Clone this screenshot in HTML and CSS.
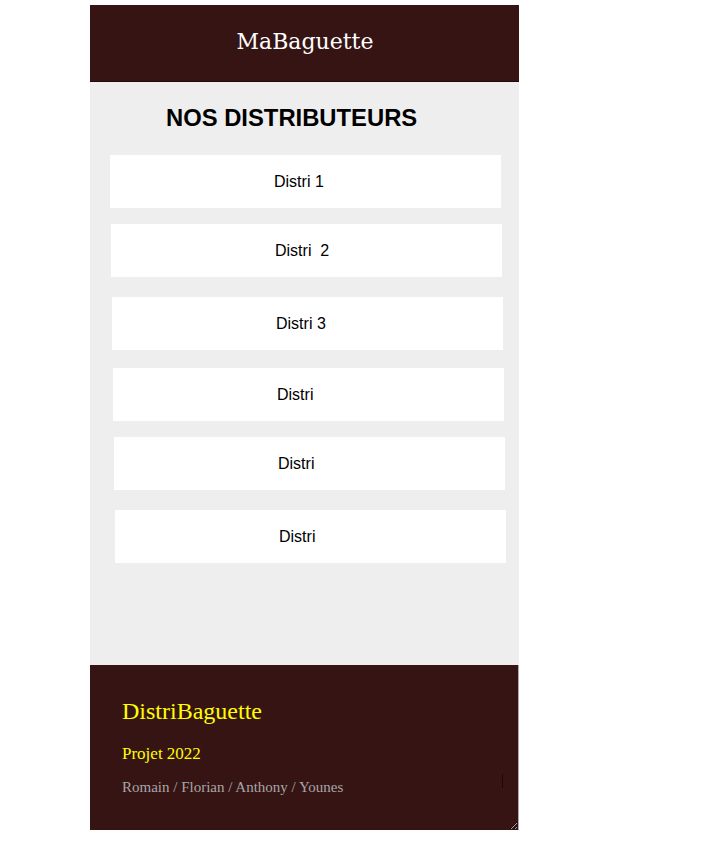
FILE: index.html
```html
<!DOCTYPE html>
<html lang="fr">
<head>
<meta charset="utf-8">
<title>MaBaguette</title>
<link rel="stylesheet" href="styles.css">
</head>
<body>
<div class="page">
  <header class="top">
    <div class="brand">MaBaguette</div>
  </header>
  <main class="content">
    <h1 class="title">NOS DISTRIBUTEURS</h1>
    <div class="list">
      <div class="card">Distri 1</div>
      <div class="card">Distri&nbsp; 2</div>
      <div class="card">Distri 3</div>
      <div class="card">Distri</div>
      <div class="card">Distri</div>
      <div class="card">Distri</div>
    </div>
  </main>
  <footer class="bottom">
    <h2 class="f-title">DistriBaguette</h2>
    <p class="f-year">Projet 2022</p>
    <p class="f-names">Romain / Florian / Anthony / Younes</p>
    <span class="caret"></span>
  </footer>
</div>
</body>
</html>
```
FILE: styles.css
```css
html, body {
  margin: 0;
  padding: 0;
  background: #ffffff;
}
.page {
  width: 429px;
  margin: 5px 0 12px 90px;
}
.top {
  height: 76px;
  background: #361414;
  border-bottom: 1px solid #1c0c06;
  display: flex;
  align-items: center;
  justify-content: center;
}
.brand {
  font-family: "DejaVu Serif", serif;
  font-size: 22px;
  color: #ffffff;
  padding-left: 1px;
  margin-top: -3px;
}
.content {
  background: #eeeeee;
  height: 561px;
  padding-top: 22px;
}
.title {
  margin: 0 0 23px 76px;
  font-family: "Liberation Sans", Arial, sans-serif;
  font-weight: bold;
  font-size: 23.8px;
  color: #000000;
}
.list {
  display: flex;
  flex-direction: column;
}
.card {
  width: 391px;
  height: 53px;
  line-height: 53px;
  background: #ffffff;
  padding-left: 164px;
  box-sizing: border-box;
  font-family: "Liberation Sans", Arial, sans-serif;
  font-size: 16px;
  color: #000000;
  margin-left: 20px;
}
.card:nth-child(2) { margin-left: 21px; margin-top: 16px; }
.card:nth-child(3) { margin-left: 22px; margin-top: 20px; }
.card:nth-child(4) { margin-left: 23px; margin-top: 18px; }
.card:nth-child(5) { margin-left: 24px; margin-top: 16px; }
.card:nth-child(6) { margin-left: 25px; margin-top: 20px; }
.bottom {
  position: relative;
  height: 165px;
  box-sizing: border-box;
  background: #361414;
  padding: 33px 0 0 32px;
  border-right: 1px solid #b0aaa8;
  resize: both;
  overflow: auto;
  font-family: "Liberation Serif", "Times New Roman", serif;
}
.f-title {
  margin: 0;
  font-size: 24px;
  font-weight: normal;
  color: #ffff00;
}
.f-year {
  margin: 19px 0 0;
  font-size: 17px;
  color: #ffff00;
}
.f-names {
  margin: 15px 0 0;
  font-size: 15px;
  color: #a6a6a6;
}
.caret {
  position: absolute;
  left: 412px;
  top: 109px;
  width: 1px;
  height: 14px;
  background: #1a0a06;
}
```
